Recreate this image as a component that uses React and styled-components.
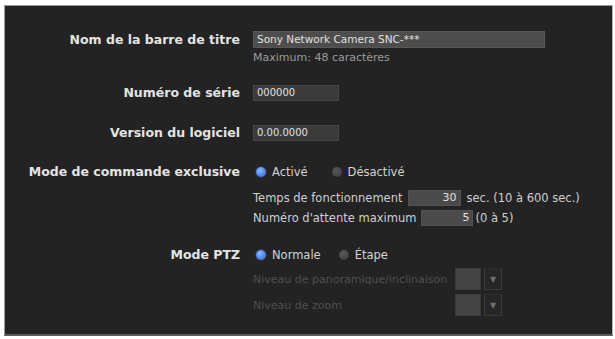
import React from "react";
import styled, { createGlobalStyle } from "styled-components";

const Global = createGlobalStyle`
  html, body { margin: 0; padding: 0; background: #ffffff; }
  body { font-family: "DejaVu Sans", Verdana, sans-serif; }
  * { box-sizing: border-box; }
`;

const Panel = styled.div`
  margin: 5px 2px 0 4px;
  width: 609px;
  height: 331px;
  background: #232323;
  border: 1px solid #9a9a9a;
  border-right-color: #b5b5b5;
  border-bottom: 2px solid #5a5a5a;
  padding-top: 25px;
`;

const Row = styled.div`
  display: grid;
  grid-template-columns: 235px 1fr;
  column-gap: 13px;
  align-items: center;
  height: ${(p) => p.$h || 16}px;
  margin-top: ${(p) => p.$mt || 0}px;
`;

const Label = styled.div`
  grid-column: 1;
  text-align: right;
  font-weight: bold;
  font-size: 12.5px;
  line-height: 16px;
  color: #e4e4e4;
  white-space: nowrap;
`;

const Cell = styled.div`
  grid-column: 2;
  display: flex;
  align-items: center;
  min-width: 0;
  font-size: ${(p) => p.$fs || 11.5}px;
  color: ${(p) => (p.$dim ? "#4f4f4f" : "#cfcfcf")};
  white-space: nowrap;
`;

const TextField = styled.div`
  width: ${(p) => p.$w}px;
  height: ${(p) => p.$h || 16}px;
  background: ${(p) => p.$bg || "#3a3a3a"};
  border: 1px solid ${(p) => p.$border || "#454545"};
  color: #e0e0e0;
  font-size: ${(p) => p.$fs || 10}px;
  line-height: ${(p) => (p.$h || 16) - 2}px;
  padding: 0 3px;
  text-align: ${(p) => (p.$right ? "right" : "left")};
  margin: 0 ${(p) => p.$mr || 0}px 0 ${(p) => p.$ml || 0}px;
  overflow: hidden;
`;

const Hint = styled.div`
  font-size: 11px;
  color: #9c9c9c;
  line-height: 13px;
`;

const RadioGroup = styled.div`
  display: flex;
  align-items: center;
  padding-left: 3px;
`;

const RadioOption = styled.span`
  display: inline-flex;
  align-items: center;
  gap: 6px;
  margin-right: ${(p) => p.$mr || 0}px;
  color: #d4d4d4;
`;

const Dot = styled.span`
  display: inline-block;
  width: 10px;
  height: 10px;
  border-radius: 50%;
  background: ${(p) =>
    p.$on
      ? "radial-gradient(circle at 40% 35%, #8fb6ff 0%, #4f86e8 55%, #3b6cc4 100%)"
      : "radial-gradient(circle at 40% 35%, #5a5a5a 0%, #454545 60%, #3a3a3a 100%)"};
  box-shadow: ${(p) => (p.$on ? "0 0 2px rgba(90,140,240,0.6)" : "none")};
`;

const SubGrid = styled.div`
  display: grid;
  grid-template-columns: 199px 26px 18px;
  column-gap: 3px;
  align-items: center;
  height: 100%;
`;

const SelBox = styled.div`
  height: 22px;
  background: #444444;
  border: 1px solid #3a3a3a;
`;

const ArrowBox = styled.div`
  height: 22px;
  background: #262626;
  border: 1px solid #3a3a3a;
  border-top-color: #2c2c2c;
  display: flex;
  align-items: center;
  justify-content: center;
  color: #6e6e6e;
  font-size: 8px;
`;

export default function App() {
  return (
    <>
      <Global />
      <Panel>
        <Row $h={17}>
          <Label>Nom de la barre de titre</Label>
          <Cell>
            <TextField $w={292} $h={17} $bg="#4d4d4d" $border="#575757" $fs={10.5}>
              Sony Network Camera SNC-***
            </TextField>
          </Cell>
        </Row>
        <Row $h={13} $mt={3}>
          <Cell>
            <Hint>Maximum: 48 caractères</Hint>
          </Cell>
        </Row>
        <Row $mt={21}>
          <Label>Numéro de série</Label>
          <Cell>
            <TextField $w={86}>000000</TextField>
          </Cell>
        </Row>
        <Row $mt={24}>
          <Label>Version du logiciel</Label>
          <Cell>
            <TextField $w={86}>0.00.0000</TextField>
          </Cell>
        </Row>
        <Row $mt={23}>
          <Label>Mode de commande exclusive</Label>
          <Cell>
            <RadioGroup>
              <RadioOption $mr={24}>
                <Dot $on />
                Activé
              </RadioOption>
              <RadioOption>
                <Dot />
                Désactivé
              </RadioOption>
            </RadioGroup>
          </Cell>
        </Row>
        <Row $mt={10}>
          <Cell>
            Temps de fonctionnement
            <TextField $w={53} $bg="#4a4a4a" $border="#525252" $fs={11} $right $ml={5} $mr={6}>
              30
            </TextField>
            sec. (10 à 600 sec.)
          </Cell>
        </Row>
        <Row $mt={4}>
          <Cell>
            Numéro d'attente maximum
            <TextField $w={52} $bg="#4a4a4a" $border="#525252" $fs={11} $right $ml={5} $mr={2}>
              5
            </TextField>
            (0 à 5)
          </Cell>
        </Row>
        <Row $mt={21}>
          <Label>Mode PTZ</Label>
          <Cell>
            <RadioGroup>
              <RadioOption $mr={18}>
                <Dot $on />
                Normale
              </RadioOption>
              <RadioOption>
                <Dot />
                Étape
              </RadioOption>
            </RadioGroup>
          </Cell>
        </Row>
        <Row $h={22} $mt={5}>
          <Cell $dim $fs={11}>
            <SubGrid>
              <span>Niveau de panoramique/inclinaison</span>
              <SelBox />
              <ArrowBox>▼</ArrowBox>
            </SubGrid>
          </Cell>
        </Row>
        <Row $h={22} $mt={4}>
          <Cell $dim $fs={11}>
            <SubGrid>
              <span>Niveau de zoom</span>
              <SelBox />
              <ArrowBox>▼</ArrowBox>
            </SubGrid>
          </Cell>
        </Row>
      </Panel>
    </>
  );
}
